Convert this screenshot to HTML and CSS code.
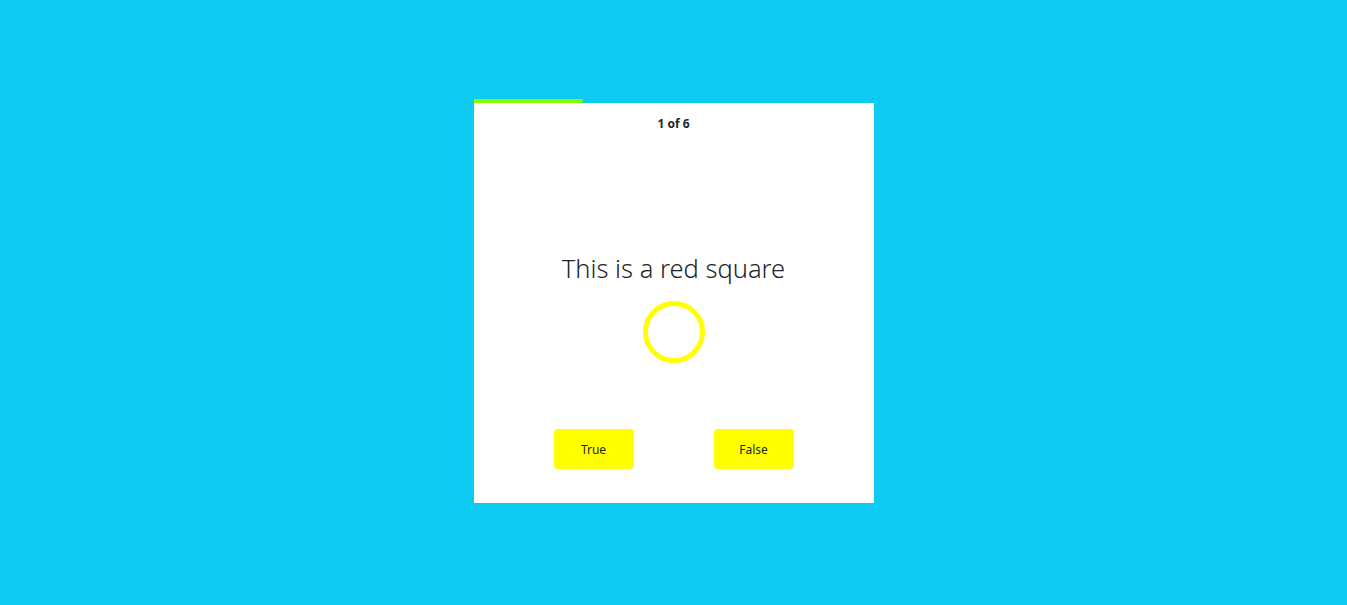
FILE: index.html
```html
<!DOCTYPE html>
<html>
<head>
<meta charset="utf-8">
<link rel="stylesheet" href="styles.css">
</head>
<body>
<div class="quiz">
  <div class="progress"><div class="progress-fill" style="width:109px"></div></div>
  <div class="card">
    <div class="counter">1 of 6</div>
    <div class="question">This is a red square</div>
    <div class="shape"></div>
    <div class="answers">
      <button class="btn">True</button>
      <button class="btn">False</button>
    </div>
  </div>
</div>
</body>
</html>
```
FILE: styles.css
```css
html, body {
  margin: 0;
  height: 100%;
}
body {
  background: #0dcaf0;
  font-family: "Noto Sans", "Open Sans", sans-serif;
  color: #212529;
  display: flex;
  align-items: center;
  justify-content: center;
}
.quiz {
  position: relative;
  width: 400px;
}
.progress {
  position: absolute;
  top: -4px;
  left: 0;
  right: 0;
  height: 4px;
}
.progress-fill {
  height: 4px;
  background: #84ff00;
  border-radius: 0 2px 2px 0;
}
.card {
  width: 400px;
  height: 400px;
  box-sizing: border-box;
  background: #fff;
  display: flex;
  flex-direction: column;
  align-items: center;
  padding-top: 11px;
}
.counter {
  font-size: 12px;
  font-weight: 700;
  line-height: 20px;
  height: 20px;
}
.question {
  margin-top: 118px;
  font-size: 25.5px;
  font-weight: 300;
  line-height: 32px;
}
.shape {
  margin-top: 17px;
  width: 62px;
  height: 62px;
  box-sizing: border-box;
  border: 5px solid #ffff00;
  border-radius: 50%;
}
.answers {
  margin-top: 66px;
  display: flex;
  gap: 80px;
}
.btn {
  width: 80px;
  height: 40px;
  border: none;
  border-radius: 4px;
  background: #ffff00;
  color: #212529;
  font-family: "Noto Sans", "Open Sans", sans-serif;
  font-size: 12px;
  padding: 2px 0 0;
}
```
